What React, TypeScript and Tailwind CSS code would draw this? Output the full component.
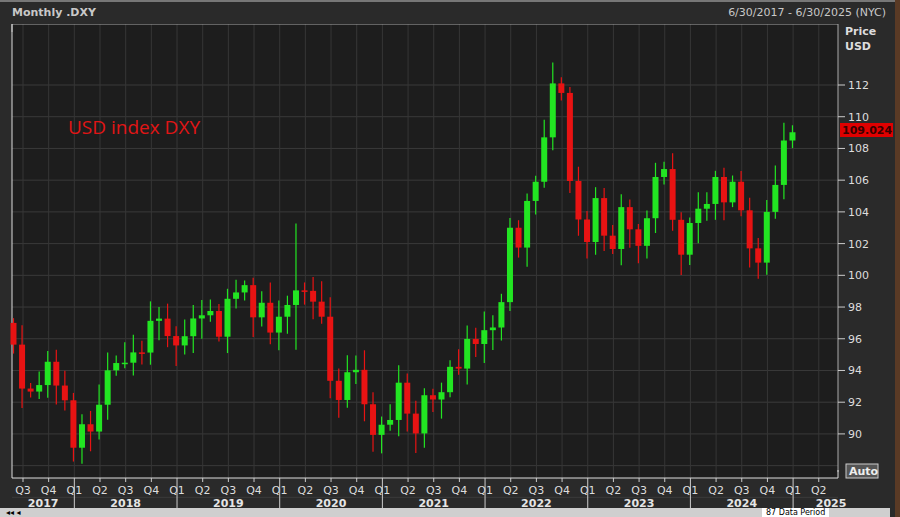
import React from "react";

const closes: number[] = [
  95.63, 92.86, 92.67, 93.08, 94.55, 93.05, 92.12,
  89.13, 90.61, 90.15, 91.84, 94.01, 94.47, 94.49, 95.14, 95.13, 97.13, 97.27, 96.17,
  95.58, 96.16, 97.28, 97.48, 97.75, 96.13, 98.52, 98.92, 99.38, 97.35, 98.27, 96.39,
  97.39, 98.13, 99.05, 99.02, 98.34, 97.39, 93.35, 92.14, 93.89, 94.04, 91.87, 89.94,
  90.58, 90.88, 93.23, 91.28, 90.03, 92.44, 92.17, 92.63, 94.23, 94.12, 95.99, 95.67,
  96.54, 96.71, 98.31, 103.0, 101.75, 104.69, 105.9, 108.7, 112.1, 111.5, 105.95, 103.52,
  102.1, 104.87, 102.5, 101.66, 104.3, 102.9, 101.86, 103.6, 106.2, 106.7, 103.5, 101.3,
  103.3, 104.2, 104.5, 106.2, 104.6, 105.9, 104.1, 101.7, 100.8, 104.0, 105.7, 108.5, 109.02,
];

const yOf = (v: number) => 85 + (112 - v) * 15.86;
const xOf = (i: number) => 13.5 + 8.56 * i;

function rnd(i: number) {
  const s = Math.sin(i * 12.9898) * 43758.5453;
  return s - Math.floor(s);
}

const quarters = ["Q3", "Q4", "Q1", "Q2"];
const years = ["2017", "2018", "2019", "2020", "2021", "2022", "2023", "2024", "2025"];

export default function App() {
  const candles = closes.map((c, i) => {
    const o = i === 0 ? 97.0 : closes[i - 1];
    const hi = Math.max(o, c) + 0.3 + rnd(i) * 1.0 + (i === 33 ? 3.5 : 0) + (i === 63 ? 1.0 : 0);
    const lo = Math.min(o, c) - 0.3 - rnd(i + 100) * 1.0 - (i === 33 ? 2.5 : 0);
    return { o, c, hi, lo, x: xOf(i) };
  });
  const qx = (k: number) => 23 + 25.67 * k;
  return (
    <div className="relative w-[900px] h-[517px] bg-[#2a2a2a] overflow-hidden" style={{ fontFamily: "Tahoma, 'DejaVu Sans', sans-serif" }}>
      <div className="flex h-[24px] items-center justify-between px-[12px] text-[11px] text-[#c8c8c8] border-t-2 border-[#777]">
        <span className="font-bold">Monthly .DXY</span>
        <span className="pr-[2px]">6/30/2017 - 6/30/2025 (NYC)</span>
      </div>
      <svg width="900" height="493" viewBox="0 24 900 493" className="block">
        <rect x="12" y="24" width="826" height="454" fill="#1d1d1d" />
        {Array.from({ length: 14 }).map((_, k) => {
          const v = 86 + k * 2;
          return <line key={"h" + k} x1="12" x2="838" y1={yOf(v)} y2={yOf(v)} stroke="#3a3a3a" strokeWidth="1" />;
        })}
        {Array.from({ length: 32 }).map((_, k) => (
          <line key={"v" + k} x1={qx(k)} x2={qx(k)} y1="24" y2="478" stroke="#363636" strokeWidth="1" />
        ))}
        <polyline points="12,32 12,24 838,24 838,472" fill="none" stroke="#aaa" strokeWidth="1" />
        <polyline points="12,24 12,478 838,478 838,470" fill="none" stroke="#ddd" strokeWidth="1" />
        {candles.map((k, i) => {
          const up = k.c >= k.o;
          const col = up ? "#22e522" : "#e81313";
          const top = yOf(Math.max(k.o, k.c));
          const bot = yOf(Math.min(k.o, k.c));
          return (
            <g key={i}>
              <line x1={k.x} x2={k.x} y1={yOf(k.hi)} y2={yOf(k.lo)} stroke={col} strokeWidth="1.2" />
              <rect x={k.x - 3} y={top} width="6" height={Math.max(1.5, bot - top)} fill={col} />
            </g>
          );
        })}
        <text x="68" y="134" fill="#e01515" fontSize="19" fontFamily="'Open Sans', sans-serif">USD index DXY</text>
        <text x="845" y="35" fill="#ddd" fontSize="11" fontWeight="bold">Price</text>
        <text x="845" y="50" fill="#ddd" fontSize="11" fontWeight="bold">USD</text>
        {[90, 92, 94, 96, 98, 100, 102, 104, 106, 108, 110, 112].map((v) => (
          <g key={v}>
            <line x1="838" x2="845" y1={yOf(v)} y2={yOf(v)} stroke="#ccc" />
            <text x="848" y={yOf(v) + 4} fill="#ddd" fontSize="11">{v}</text>
          </g>
        ))}
        <rect x="840" y="123" width="53" height="14" fill="#e00000" />
        <text x="842" y="134" fill="#3a0000" fontSize="11" fontWeight="bold">109.024</text>
        <rect x="846" y="464" width="32" height="14" fill="#555" stroke="#ccc" />
        <text x="849" y="475" fill="#eee" fontSize="11" fontWeight="bold">Auto</text>
        {Array.from({ length: 32 }).map((_, k) => (
          <g key={"q" + k}>
            <line x1={qx(k)} x2={qx(k)} y1="478" y2="482" stroke="#ccc" />
            <text x={qx(k)} y="494" fill="#ddd" fontSize="11" textAnchor="middle">{quarters[k % 4]}</text>
          </g>
        ))}
        {years.map((y, i) => {
          const start = i === 0 ? 12 : qx(2 + (i - 1) * 4);
          const end = i === 8 ? qx(32) + 5 : qx(2 + i * 4);
          return (
            <g key={y}>
              {i > 0 && <line x1={start} x2={start} y1="482" y2="510" stroke="#ccc" />}
              <text x={i === 8 ? start + 38 : (start + end) / 2} y="507" fill="#e5e5e5" fontSize="11" fontWeight="bold" textAnchor="middle">{y}</text>
            </g>
          );
        })}
      </svg>
      <div className="absolute left-0 bottom-0 w-[890px] h-[9px] bg-[#cfcfcf] text-[8px] leading-[9px] text-black overflow-hidden">
        <span className="ml-[6px]">◂◂ ◂</span>
        <span className="absolute left-[762px] top-0 bg-white px-1">87 Data Period</span>
      </div>
      <div className="absolute right-0 top-0 w-[5px] h-full bg-[#5a3a25]" />
    </div>
  );
}
